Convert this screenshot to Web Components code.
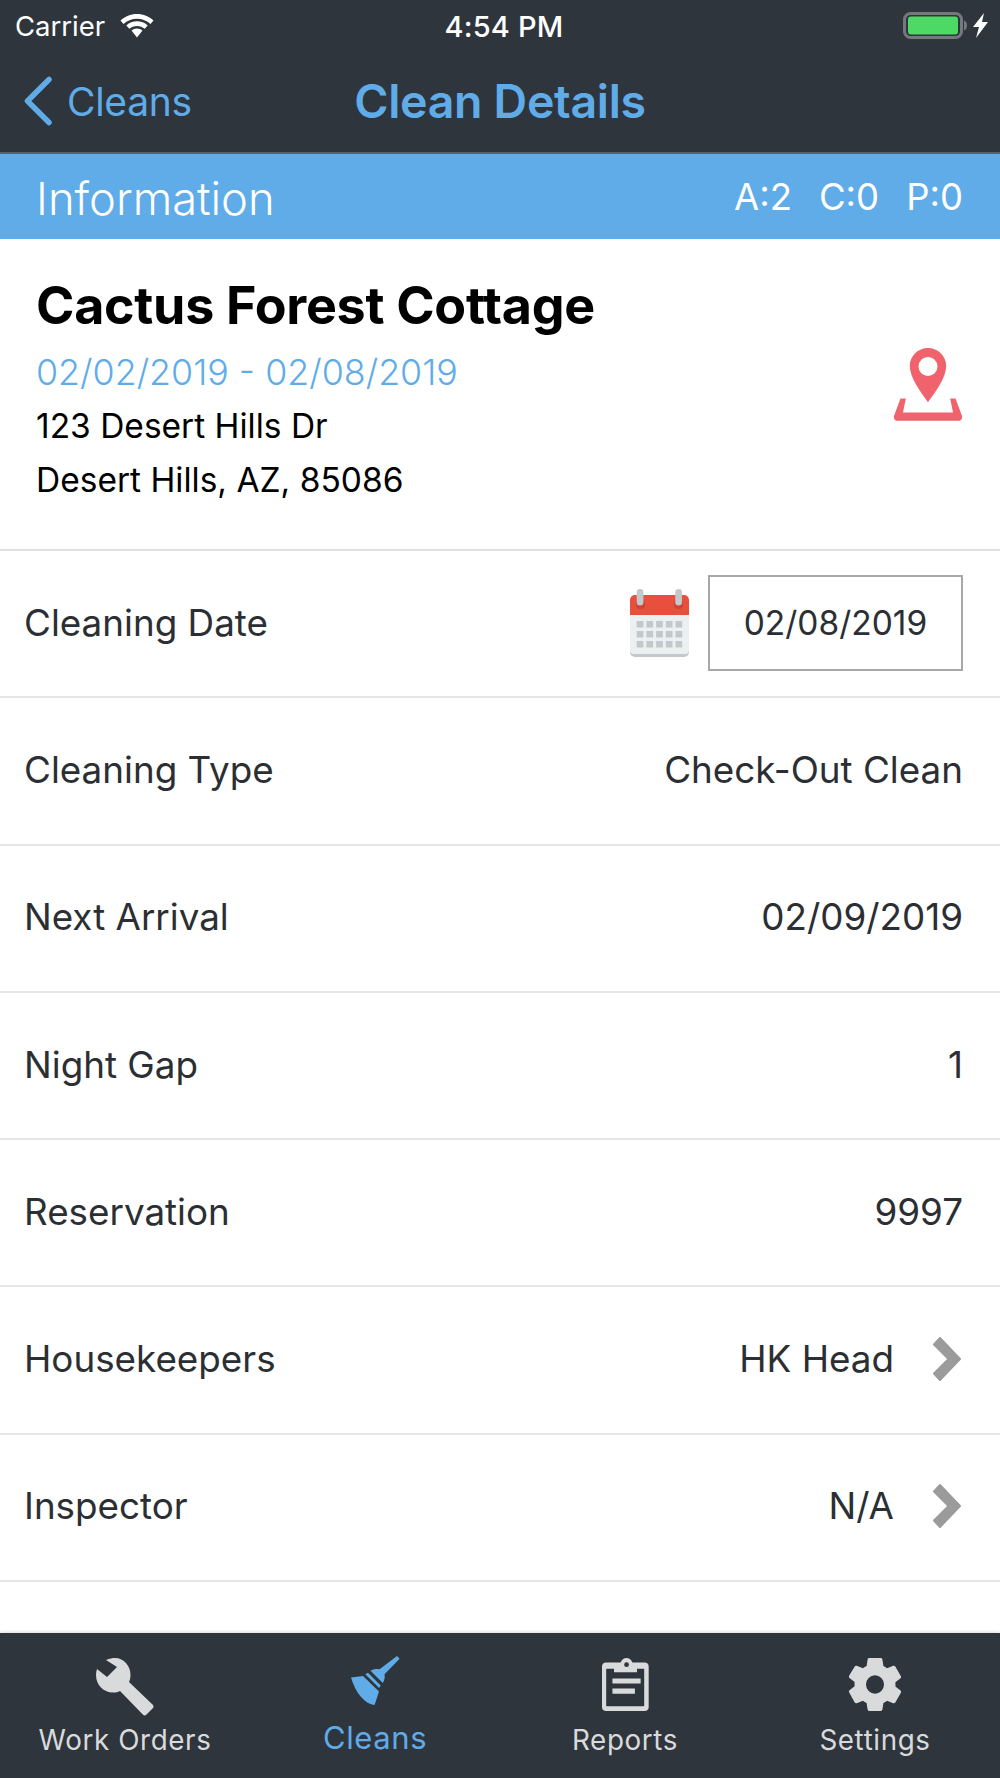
<!DOCTYPE html>
<html>
<head>
<meta charset="utf-8">
<style>
  html, body { margin: 0; padding: 0; background: #fff; }
  body { width: 1000px; height: 1778px; overflow: hidden; font-family: Inter, "Liberation Sans", sans-serif; color: #2b2f33; }
  clean-screen { height: 1778px; }
</style>
</head>
<body>
<clean-screen>
  <status-bar slot="top"></status-bar>
  <nav-bar slot="top" back="Cleans" heading="Clean Details"></nav-bar>
  <info-bar slot="top" heading="Information"></info-bar>
  <property-card name="Cactus Forest Cottage" dates="02/02/2019 - 02/08/2019">
    <div>123 Desert Hills Dr</div>
    <div>Desert Hills, AZ, 85086</div>
  </property-card>
  <detail-row label="Cleaning Date" kind="date" value="02/08/2019"></detail-row>
  <detail-row label="Cleaning Type" value="Check-Out Clean"></detail-row>
  <detail-row label="Next Arrival" value="02/09/2019"></detail-row>
  <detail-row label="Night Gap" value="1"></detail-row>
  <detail-row label="Reservation" value="9997"></detail-row>
  <detail-row label="Housekeepers" value="HK Head" kind="link"></detail-row>
  <detail-row label="Inspector" value="N/A" kind="link"></detail-row>
  <tab-bar slot="bottom"></tab-bar>
</clean-screen>

<script>
const icons = {
  wrench: '<path d="M10 2C13.500 .5 17 0 19 0C28 0 34.500 8 34.500 17C34.500 19.500 34 22 33 24L56.500 46.500C57.800 47.800 58 49 56.800 50.300L50.500 56.600C49.300 57.800 48 57.800 46.800 56.600L24 33C22 34 19.500 34.500 17 34.500C7 34.500 0 26.500 0 17C0 15 .3 13 1 11L11 19L21 9Z"/>',
  broom: '<path d="M46 0l2.600 2.800-15.100 15.400c.7 2.900-.1 6.200-1.700 8.900L19.500 14.800c2.700-1.700 6.100-2.200 9.100-1.500zM17 16.800l12.700 12.700-1.600 2.600-13.800-13.800zM12 20l16 15.400-4.400 13.700C14.400 48.200 4.700 38 0 21.600z"/>',
  report: '<path fill-rule="evenodd" d="M23.500 0c2.400 0 4.500 1.500 5.200 3.800 0 .3.300.5.600.5h11.600c2.200 0 3.800 1.600 3.800 3.700v40.300c0 2-1.700 3.700-3.800 3.700H3.800C1.700 52 0 50.300 0 48.300V8C0 5.900 1.700 4.300 3.800 4.300h13.900c.3 0 .5-.2.600-.5C19 1.500 21.100 0 23.500 0zm0 4.200a2.300 2.300 0 1 0 0 4.600 2.300 2.300 0 0 0 0-4.600zM4.600 10.500c-.4 0-.6.200-.6.600v35.600c0 .5.200.7.600.7h35.200c.4 0 .6-.2.600-.7V11.100c0-.4-.2-.6-.6-.6h-6.300V14H11.500v-3.500zM10 20h27v5H10zm0 10h21.500v5H10z"/>',
  gear: '<path fill-rule="evenodd" d="M20.300 0h11.400c.9 0 1.600.6 1.700 1.400l1 6.500c1.300.6 2.500 1.300 3.700 2.100l6.100-2.400c.8-.3 1.700 0 2.100.7l5.600 9.500c.4.700.2 1.600-.4 2.100l-5.100 4c.1 1.400.1 2.800 0 4.100l5.100 4c.6.500.8 1.400.4 2.100L46.300 43.700c-.4.700-1.300 1-2.100.7l-6.100-2.400c-1.200.8-2.400 1.500-3.700 2.100l-1 6.500c-.1.800-.8 1.400-1.700 1.400H20.300c-.9 0-1.600-.6-1.700-1.400l-1-6.500c-1.300-.6-2.500-1.300-3.700-2.100l-6.100 2.400c-.8.300-1.700 0-2.100-.7L.1 33.700c-.4-.7-.2-1.600.4-2.100l5.100-4c-.1-1.300-.1-2.700 0-4.100l-5.100-4c-.6-.5-.8-1.400-.4-2.100L5.700 8.300c.4-.7 1.300-1 2.100-.7l6.100 2.400c1.200-.8 2.400-1.500 3.700-2.100l1-6.500c.1-.8.800-1.400 1.700-1.400zM26 17a9 9 0 1 0 0 18 9 9 0 0 0 0-18z"/>'
};

function shadow(el, html) {
  el.attachShadow({ mode: 'open' });
  el.shadowRoot.innerHTML = html;
}

class CleanScreen extends HTMLElement {
  connectedCallback() {
    shadow(this, `
      <style>
        :host { display: flex; flex-direction: column; width: 1000px; }
        main { flex: 1; min-height: 0; display: flex; flex-direction: column; overflow: hidden; }
      </style>
      <slot name="top"></slot>
      <main><slot></slot></main>
      <slot name="bottom"></slot>
    `);
  }
}

class StatusBar extends HTMLElement {
  connectedCallback() {
    shadow(this, `
      <style>
        :host { display: grid; grid-template-columns: 1fr auto 1fr; align-items: center; height: 52px; padding: 0 10px 0 15px; background: #2f353c; color: #fff; font-size: 27.500px; }
        .left { display: flex; align-items: center; gap: 15px; }
        .time { font-weight: 500; font-size: 29px; letter-spacing: .2px; margin-left: 3px; }
        .right { display: flex; justify-content: flex-end; align-items: center; }
        svg { display: block; }
      </style>
      <div class="left">Carrier
        <svg width="34" height="24" viewBox="0 0 34 24" fill="#fff"><path d="M17 0C10.500 0 5 2.500 .5 6.500L3.500 10C7 6.800 11.800 4.800 17 4.800S27 6.800 30.500 10L33.500 6.500C29 2.500 23.500 0 17 0z"/><path d="M17 7.300C13 7.300 9.300 8.800 6.300 11.400L9.300 14.800C11.300 13 14 11.900 17 11.900S22.700 13 24.700 14.800L27.700 11.400C24.700 8.800 21 7.300 17 7.300z"/><path d="M17 14.500C14.800 14.500 13 15.300 11.500 16.500L17 23.500 22.500 16.500C21 15.300 19.200 14.500 17 14.500z"/></svg>
      </div>
      <div class="time">4:54 PM</div>
      <div class="right">
        <svg width="88" height="30" viewBox="0 0 88 30"><rect x="2.500" y="2.500" width="57" height="24" rx="6" fill="none" stroke="#74797e" stroke-width="3"/><rect x="6" y="5.500" width="50" height="18" rx="3" fill="#4cd964"/><path d="M62 9.500c2 .6 3 2.500 3 5s-1 4.400-3 5z" fill="#74797e"/><path d="M82 2 71 16h6L74 27 86 11h-6z" fill="#fff"/></svg>
      </div>
    `);
  }
}

class NavBar extends HTMLElement {
  connectedCallback() {
    shadow(this, `
      <style>
        :host { display: block; height: 100px; background: #2f353c; border-bottom: 2px solid #5b6066; color: #5face8; }
        .row { display: grid; grid-template-columns: 1fr auto 1fr; align-items: center; box-sizing: border-box; height: 100%; padding: 0 23px 2px; }
        .back { display: flex; align-items: center; gap: 14px; font-size: 39px; letter-spacing: -.3px; }
        h1 { margin: 0; font-size: 46.500px; font-weight: 600; letter-spacing: -.3px; }
        svg { display: block; }
      </style>
      <div class="row">
        <span class="back">
          <svg width="30" height="50" viewBox="0 0 30 50"><path d="M26 3.500 4.500 25 26 46.500" fill="none" stroke="#5face8" stroke-width="5.500" stroke-linecap="round" stroke-linejoin="round"/></svg>
          ${this.getAttribute('back')}
        </span>
        <h1>${this.getAttribute('heading')}</h1>
      </div>
    `);
  }
}

class InfoBar extends HTMLElement {
  connectedCallback() {
    shadow(this, `
      <style>
        :host { display: flex; justify-content: space-between; align-items: center; height: 85px; padding: 0 37px 0 36px; background: #5face9; color: #fff; }
        .title { font-size: 45.300px; font-weight: 300; margin-top: 3px; }
        .counts { display: flex; gap: 27px; font-size: 36.500px; font-weight: 400; }
      </style>
      <div class="title">${this.getAttribute('heading')}</div>
      <div class="counts"><span>A:2</span><span>C:0</span><span>P:0</span></div>
    `);
  }
}

class PropertyCard extends HTMLElement {
  connectedCallback() {
    shadow(this, `
      <style>
        :host { display: flex; justify-content: space-between; align-items: center; box-sizing: border-box; height: 312px; padding: 0 37px 6px 36px; border-bottom: 2px solid #e0e0e0; background: #fff; color: #000; flex: none; }
        h2 { margin: 0 0 10px; font-size: 52px; line-height: 62px; font-weight: 700; letter-spacing: -.3px; }
        .dates { font-size: 35.800px; line-height: 50px; color: #5face9; font-weight: 300; }
        .addr { font-size: 33.500px; line-height: 54px; margin-top: 2px; }
        svg { display: block; margin-bottom: 12px; }
      </style>
      <div>
        <h2>${this.getAttribute('name')}</h2>
        <div class="dates">${this.getAttribute('dates')}</div>
        <div class="addr"><slot></slot></div>
      </div>
      <svg width="70" height="74" viewBox="0 0 70 74">
        <path fill="#f0636c" fill-rule="evenodd" d="M35 0c10 0 18.200 8 18.200 18 0 12-11 26-18.200 36.200C27.800 44 16.800 30 16.800 18 16.800 8 25 0 35 0zm0 9a9.500 9.500 0 1 0 0 19 9.500 9.500 0 0 0 0-19z"/>
        <path fill="#f0636c" d="M7.500 50.500h5.300L10 64.500h50l-2.800-14h5.300L69 68c.6 2.600-.9 4.800-3.500 4.800h-61C1.900 72.800.400 70.600 1 68z"/>
      </svg>
    `);
  }
}

class DetailRow extends HTMLElement {
  connectedCallback() {
    const kind = this.getAttribute('kind');
    const value = this.getAttribute('value');
    let right = `<span>${value}</span>`;
    if (kind === 'link') {
      right += `<svg class="chev" width="28" height="44" viewBox="0 0 28 44"><path d="M7 1 27 22 7 43 1 36.500 15.500 22 1 7.500z" fill="#9b9b9b" stroke="#9b9b9b" stroke-width="2" stroke-linejoin="round"/></svg>`;
    }
    if (kind === 'date') {
      right = `
        <svg class="cal" width="59" height="68" viewBox="0 0 59 68">
          <path d="M0 24h59v39a5 5 0 0 1-5 5H5a5 5 0 0 1-5-5z" fill="#c3c8cd"/>
          <path d="M0 24h59v37a4 4 0 0 1-4 4H4a4 4 0 0 1-4-4z" fill="#edf0f1"/>
          <path d="M5 6h49a5 5 0 0 1 5 5v15H0V11a5 5 0 0 1 5-5z" fill="#e94f3d"/>
          <rect x="6" y="11" width="9" height="9" rx="4" fill="#c4382b" opacity=".6"/>
          <rect x="44" y="11" width="9" height="9" rx="4" fill="#c4382b" opacity=".6"/>
          <rect x="6.700" y="0" width="6.700" height="16.500" rx="3.300" fill="#c3c8cd"/>
          <rect x="45.300" y="0" width="6.700" height="16.500" rx="3.300" fill="#c3c8cd"/>
          ${[0, 1, 2].map(r => [0, 1, 2, 3, 4].map(c => `<rect x="${6.700 + c * 9.700}" y="${32 + r * 10}" width="6.700" height="6.500" fill="#c3c8cd"/>`).join('')).join('')}
        </svg>
        <span class="box">${value}</span>`;
    }
    shadow(this, `
      <style>
        :host { display: flex; justify-content: space-between; align-items: center; box-sizing: border-box; height: 147.300px; flex: none; padding: 0 37px 3px 24px; border-bottom: 2px solid #e6e6e6; background: #fff; color: #2b2f33; font-size: 36.800px; }
        :host([kind="date"]) .right { margin-top: 1px; }
        .right { display: flex; align-items: center; }
        .chev { display: block; margin-left: 39px; margin-right: 2px; }
        .cal { display: block; margin-right: 19px; }
        .box { display: flex; align-items: center; justify-content: center; box-sizing: border-box; width: 255px; height: 96px; border: 2px solid #a8a8a8; font-size: 33.500px; }
      </style>
      <span>${this.getAttribute('label')}</span>
      <div class="right">${right}</div>
    `);
  }
}

class TabBar extends HTMLElement {
  connectedCallback() {
    shadow(this, `
      <style>
        :host { display: grid; grid-template-columns: 250px 250px 250px 250px; height: 145px; background: #2f353c; box-shadow: 0 -1px 3px rgba(0,0,0,.15); position: relative; }
      </style>
      <tab-item icon="wrench" label="Work Orders" vb="0 0 58 58" w="58" h="58"></tab-item>
      <tab-item icon="broom" label="Cleans" vb="0 0 49 50" w="49" h="50" active></tab-item>
      <tab-item icon="report" label="Reports" vb="0 0 45 52" w="47" h="53"></tab-item>
      <tab-item icon="gear" label="Settings" vb="0 0 52 52" w="52" h="53"></tab-item>
    `);
  }
}

class TabItem extends HTMLElement {
  connectedCallback() {
    const active = this.hasAttribute('active');
    const color = active ? '#5face9' : '#d9dadb';
    shadow(this, `
      <style>
        :host { display: flex; flex-direction: column; align-items: center; justify-content: flex-start; padding-top: 23px; color: ${color}; font-size: ${active ? 31 : 27.800}px; font-weight: 400; letter-spacing: .6px; }
        .ic { height: 58px; display: flex; align-items: flex-start; justify-content: center; padding-top: ${active ? 0 : 2}px; box-sizing: border-box; }
        svg { display: block; fill: ${color}; }
        .lbl { margin-top: ${active ? 6 : 8}px; line-height: 36px; }
      </style>
      <div class="ic"><svg width="${this.getAttribute('w')}" height="${this.getAttribute('h')}" viewBox="${this.getAttribute('vb')}" preserveAspectRatio="none">${icons[this.getAttribute('icon')]}</svg></div>
      <div class="lbl">${this.getAttribute('label')}</div>
    `);
  }
}

customElements.define('clean-screen', CleanScreen);
customElements.define('status-bar', StatusBar);
customElements.define('nav-bar', NavBar);
customElements.define('info-bar', InfoBar);
customElements.define('property-card', PropertyCard);
customElements.define('detail-row', DetailRow);
customElements.define('tab-bar', TabBar);
customElements.define('tab-item', TabItem);
</script>
</body>
</html>
